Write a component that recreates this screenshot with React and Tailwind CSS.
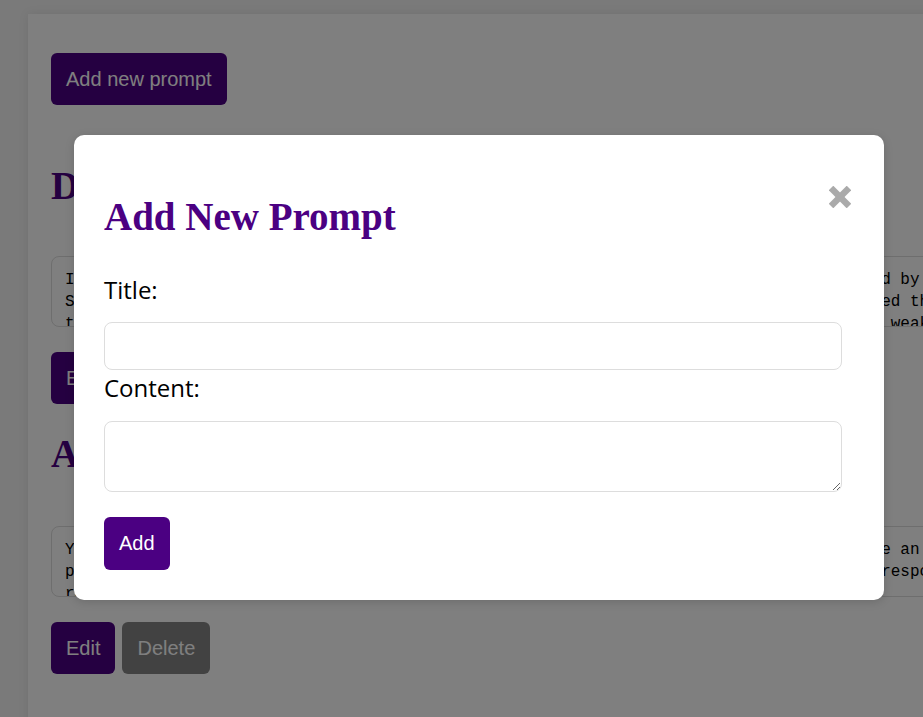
import React from 'react';

// ─── Saved prompts shown behind the dialog ───────────────────────
const PROMPTS = [
  {
    title: 'Default Prompt',
    lines: [
      'I want you to act as an experienced technical writer. Please rewrite the text provided by the user.',
      'Simplify complex sentences, fix grammar and spelling mistakes, and keep the format used throughout the',
      'text. Do not add new information and do not remove any key points, and point out some weak spots.',
    ],
  },
  {
    title: 'Assistant Prompt',
    lines: [
      'You are a friendly and knowledgeable assistant. Read each question carefully, and give an accurate and',
      'precise, well structured answer. If you are unsure, say so instead of guessing. Each response should',
      'remain short, friendly and easy to follow for the reader.',
    ],
  },
];

const serif = "font-['Liberation_Serif',serif]";
const sans = "font-['Liberation_Sans',Arial,sans-serif]";
const mono =
  "h-[71px] w-[1000px] overflow-hidden rounded-lg border border-[#ddd] px-[13px] py-[12px] font-['Liberation_Mono',monospace] text-[16px] leading-[22px] whitespace-pre text-black";

const Actions = () => (
  <div className={`${sans} mt-[25px] flex gap-[7px] text-[20px] leading-[22px] text-white`}>
    <button className="rounded-md bg-[#4b0082] px-[15px] py-[15px]">Edit</button>
    <button className="rounded-md bg-[#858585] px-[15px] py-[15px]">Delete</button>
  </div>
);

const CloseIcon = () => (
  <svg width="22" height="22" viewBox="0 0 22 22">
    <line x1="2" y1="2" x2="20" y2="20" stroke="#aaa" strokeWidth="6.5" />
    <line x1="20" y1="2" x2="2" y2="20" stroke="#aaa" strokeWidth="6.5" />
  </svg>
);

export default function App() {
  return (
    <div className="relative h-[717px] w-[923px] overflow-hidden bg-[#f4f4f4]">
      {/* Page card */}
      <div className="ml-[28px] mt-[14px] min-h-[800px] w-[1000px] bg-white px-[23px] pt-[39px] shadow-[0_0_10px_rgba(0,0,0,0.08)]">
        <button className={`${sans} rounded-md bg-[#4b0082] px-[15px] py-[15px] text-[20px] leading-[22px] text-white`}>
          Add new prompt
        </button>

        <h2 className={`${serif} mt-[59px] text-[39px] font-bold leading-[44px] text-[#4b0082]`}>
          {PROMPTS[0].title}
        </h2>
        <div className={`${mono} mt-[48px]`}>{PROMPTS[0].lines.join('\n')}</div>
        <Actions />

        <h2 className={`${serif} mt-[28px] text-[39px] font-bold leading-[44px] text-[#4b0082]`}>
          {PROMPTS[1].title}
        </h2>
        <div className={`${mono} mt-[50px]`}>{PROMPTS[1].lines.join('\n')}</div>
        <Actions />
      </div>

      {/* Overlay + dialog */}
      <div className="absolute inset-0 bg-black/50">
        <div className="absolute left-[74px] top-[135px] w-[810px] rounded-[10px] bg-white p-[30px] shadow-[0_2px_10px_rgba(0,0,0,0.15)]">
          <button className="absolute left-[755px] top-[51px]">
            <CloseIcon />
          </button>
          <h2 className={`${serif} mt-[30px] text-[39px] font-bold leading-[44px] text-[#4b0082]`}>
            Add New Prompt
          </h2>
          <label className="mt-[34px] block font-['Open_Sans',sans-serif] text-[24px] leading-[33px] text-black">
            Title:
          </label>
          <input
            type="text"
            className="mt-[16px] block h-[48px] w-[738px] rounded-lg border border-[#ddd] px-3 outline-none"
          />
          <label className="mt-[1px] block font-['Open_Sans',sans-serif] text-[24px] leading-[33px] text-black">
            Content:
          </label>
          <textarea className="mt-[17px] block h-[71px] w-[738px] rounded-lg border border-[#ddd] px-3 py-2 outline-none" />
          <button className={`${sans} mt-[25px] rounded-md bg-[#4b0082] px-[15px] py-[15px] text-[20px] leading-[23px] text-white`}>
            Add
          </button>
        </div>
      </div>
    </div>
  );
}
